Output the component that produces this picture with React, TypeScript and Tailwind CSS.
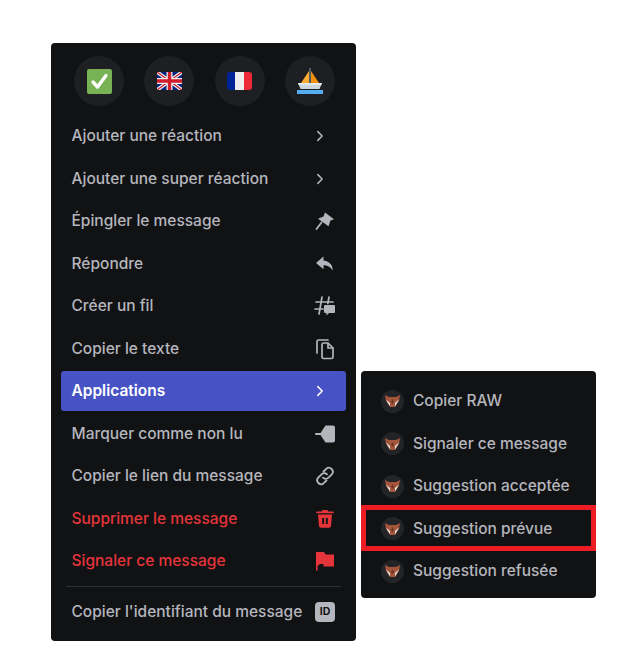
import React from 'react';

const font = "font-['Inter','Noto_Sans',sans-serif]";

const Chevron = () => (
  <svg className="mr-[10px]" width="16" height="16" viewBox="0 0 16 16" fill="none" stroke="currentColor" strokeWidth="1.700" strokeLinecap="round" strokeLinejoin="round">
    <path d="M5.500 3l5 5-5 5" />
  </svg>
);

const PinIcon = () => (
  <svg width="20" height="20" viewBox="0 0 20 20" fill="currentColor">
    <path d="M10 1.500l9 6.800-3.500 1.200-2 5.800L3 7.800l5.500-2.300z" />
    <path d="M6.500 11.500L1.500 18" stroke="currentColor" strokeWidth="1.800" strokeLinecap="round" />
  </svg>
);

const ReplyIcon = () => (
  <svg width="20" height="20" viewBox="0 0 20 20" fill="currentColor">
    <path d="M8.500 2.500L1 9l7.500 6.200v-4c4 0 7 1.500 9 5.300.6-4-1.500-8.800-9-10z" />
  </svg>
);

const ThreadIcon = () => (
  <svg width="22" height="22" viewBox="0 0 22 22" fill="none">
    <path d="M8 2L5 19M15 2l-1.200 6.500M2 7h17M1 14h8" stroke="currentColor" strokeWidth="1.700" strokeLinecap="round" />
    <path d="M11 10h9a1 1 0 0 1 1 1v6a1 1 0 0 1-1 1h-5l-2.500 2.500V18H11a1 1 0 0 1-1-1v-6a1 1 0 0 1 1-1z" fill="currentColor" />
  </svg>
);

const CopyIcon = () => (
  <svg width="20" height="22" viewBox="0 0 20 22" fill="none" stroke="currentColor" strokeWidth="1.700" strokeLinejoin="round">
    <path d="M13 2H3.500A1.500 1.500 0 0 0 2 3.500V15" strokeLinecap="round" />
    <path d="M7 6.500A1.500 1.500 0 0 1 8.500 5H13v5h5v9a1.500 1.500 0 0 1-1.500 1.500h-8A1.500 1.500 0 0 1 7 19z" />
    <path d="M13 5l5 5" />
  </svg>
);

const TagIcon = () => (
  <svg width="21" height="20" viewBox="0 0 21 20" fill="currentColor">
    <path d="M10.500 1.500H18a2 2 0 0 1 2 2v13a2 2 0 0 1-2 2h-7.500L5.500 11H1a1 1 0 0 1 0-2h4.500z" />
  </svg>
);

const LinkIcon = () => (
  <svg width="20" height="20" viewBox="0 0 20 20" fill="none" stroke="currentColor" strokeWidth="1.800" strokeLinecap="round">
    <path d="M8.500 5.500l2.800-2.700a3.900 3.900 0 0 1 5.500 5.500l-3.300 3.300a3.900 3.900 0 0 1-5.500 0" />
    <path d="M11.500 14.500l-2.800 2.700a3.900 3.900 0 0 1-5.500-5.500l3.300-3.300a3.900 3.900 0 0 1 5.500 0" />
  </svg>
);

const TrashIcon = () => (
  <svg width="20" height="20" viewBox="0 0 20 20" fill="currentColor">
    <path d="M7.500 1h5l.8 1.500H18a.8.8 0 0 1 0 1.700H2a.8.8 0 0 1 0-1.700h4.700z" />
    <path fillRule="evenodd" d="M3 5.500h14L16 17a2 2 0 0 1-2 1.800H6A2 2 0 0 1 4 17zM7.200 9v6h1.900V9zm3.700 0v6h1.900V9z" />
  </svg>
);

const FlagIcon = () => (
  <svg width="20" height="20" viewBox="0 0 20 20" fill="currentColor">
    <path d="M1 1h8l1.500 2.500H19v12H8.500V13H5l-2.400 2v4.500H1z" />
  </svg>
);

const IdIcon = () => (
  <div className="flex h-5 w-5 items-center justify-center rounded-[4px] bg-[#b5b6bd]">
    <span className="text-[10.500px] leading-none font-bold text-[#111214]">ID</span>
  </div>
);

const CheckEmoji = () => (
  <svg width="25" height="25" viewBox="0 0 25 25">
    <rect width="25" height="25" rx="2" fill="#77b255" />
    <path d="M6 13l4.500 5L19 6.500" fill="none" stroke="#fff" strokeWidth="3.400" strokeLinecap="round" strokeLinejoin="round" />
  </svg>
);

const UkEmoji = () => (
  <svg width="25" height="18" viewBox="0 0 25 18">
    <rect width="25" height="18" rx="2" fill="#00247d" />
    <path d="M0 0l25 18M25 0L0 18" stroke="#eee" strokeWidth="3.600" />
    <path d="M0 0l25 18M25 0L0 18" stroke="#cf1b2b" strokeWidth="1.200" />
    <path d="M12.500 0v18M0 9h25" stroke="#eee" strokeWidth="6" />
    <path d="M12.500 0v18M0 9h25" stroke="#cf1b2b" strokeWidth="3.400" />
  </svg>
);

const FrEmoji = () => (
  <div className="flex h-[18px] w-[25px] overflow-hidden rounded-[3px]">
    <div className="flex-1 bg-[#002495]" />
    <div className="flex-1 bg-[#eeeeee]" />
    <div className="flex-1 bg-[#ed2939]" />
  </div>
);

const BoatEmoji = () => (
  <svg width="26" height="28" viewBox="0 0 26 28">
    <path d="M13 1v18" stroke="#66757f" strokeWidth="1.400" />
    <path d="M12 4L4 16h8z" fill="#ffac33" />
    <path d="M14 4l8 12h-8z" fill="#f4900c" />
    <path d="M1 16h24l-2.500 6h-19z" fill="#ccd6dd" />
    <path d="M1 16h24l-.8 2H1.800z" fill="#e1e8ed" />
    <rect y="23" width="26" height="4" fill="#55acee" />
  </svg>
);

const BotAvatar = () => (
  <div className="flex h-[23px] w-[23px] shrink-0 items-center justify-center rounded-full bg-[#232428]">
    <svg width="17" height="14" viewBox="0 0 17 14">
      <path d="M1 1l4 2h7l4-2-1 6-4 6H6L2 7z" fill="#a3563c" />
      <path d="M2 5.500l4 3.500v3.500zM15 5.500l-4 3.500v3.500z" fill="#e8e8e8" />
      <path d="M8.500 5l1.500 3-1.500 2-1.500-2z" fill="#6d3524" />
    </svg>
  </div>
);

type Item = { label: string; icon: React.ReactNode; tone?: 'danger' | 'active' };

const items: Item[] = [
  { label: 'Ajouter une réaction', icon: <Chevron /> },
  { label: 'Ajouter une super réaction', icon: <Chevron /> },
  { label: 'Épingler le message', icon: <PinIcon /> },
  { label: 'Répondre', icon: <ReplyIcon /> },
  { label: 'Créer un fil', icon: <ThreadIcon /> },
  { label: 'Copier le texte', icon: <CopyIcon /> },
  { label: 'Applications', icon: <Chevron />, tone: 'active' },
  { label: 'Marquer comme non lu', icon: <TagIcon /> },
  { label: 'Copier le lien du message', icon: <LinkIcon /> },
  { label: 'Supprimer le message', icon: <TrashIcon />, tone: 'danger' },
  { label: 'Signaler ce message', icon: <FlagIcon />, tone: 'danger' },
];

const MenuRow: React.FC<Item> = ({ label, icon, tone }) => {
  const toneClass =
    tone === 'active'
      ? 'bg-[#4752c4] text-white font-semibold rounded-[3px]'
      : tone === 'danger'
        ? 'text-[#e5353b] font-medium'
        : 'text-[#b5b6bd] font-medium';
  return (
    <div className={`flex h-10 items-center justify-between pl-[10.500px] pr-[9px] text-[15.500px] ${toneClass}`}>
      <span>{label}</span>
      <div className="flex w-6 items-center justify-center">{icon}</div>
    </div>
  );
};

const apps = ['Copier RAW', 'Signaler ce message', 'Suggestion acceptée', 'Suggestion prévue', 'Suggestion refusée'];

export default function App() {
  return (
    <div className={`flex h-[651px] w-[627px] items-start gap-[5px] overflow-hidden bg-white pl-[51px] pt-[43px] ${font}`}>
      <div className="w-[305px] rounded-[4px] bg-[#111214] px-[10px] pb-[9px] pt-[13px]">
        <div className="mb-[10px] flex justify-between pl-[13px] pr-[11px]">
          {[<CheckEmoji key="c" />, <UkEmoji key="u" />, <FrEmoji key="f" />, <BoatEmoji key="b" />].map((emoji, i) => (
            <div key={i} className="flex h-[50px] w-[50px] items-center justify-center rounded-full bg-[#1e1f22]">
              {emoji}
            </div>
          ))}
        </div>
        <div className="flex flex-col gap-[2.500px]">
          {items.map((item) => (
            <MenuRow key={item.label} {...item} />
          ))}
        </div>
        <div className="mx-[5px] my-[5px] h-px bg-[#2e2f34]" />
        <div className="flex h-10 items-center justify-between pl-[10.500px] pr-[9px] text-[15.500px] font-medium text-[#b5b6bd]">
          <span>Copier l'identifiant du message</span>
          <div className="flex w-6 items-center justify-center">
            <IdIcon />
          </div>
        </div>
      </div>

      <div className="relative mt-[328px] w-[235px] rounded-[4px] bg-[#111214] pb-[7px] pt-[10px]">
        <div className="flex flex-col gap-[2.500px]">
          {apps.map((label) => (
            <div key={label} className="flex h-10 items-center gap-[9px] pl-5 text-[15.500px] font-medium text-[#b5b6bd]">
              <BotAvatar />
              <span>{label}</span>
            </div>
          ))}
        </div>
        <div className="absolute left-0 right-0 top-[134px] h-[46px] border-[5px] border-[#ed1c24]" />
      </div>
    </div>
  );
}
